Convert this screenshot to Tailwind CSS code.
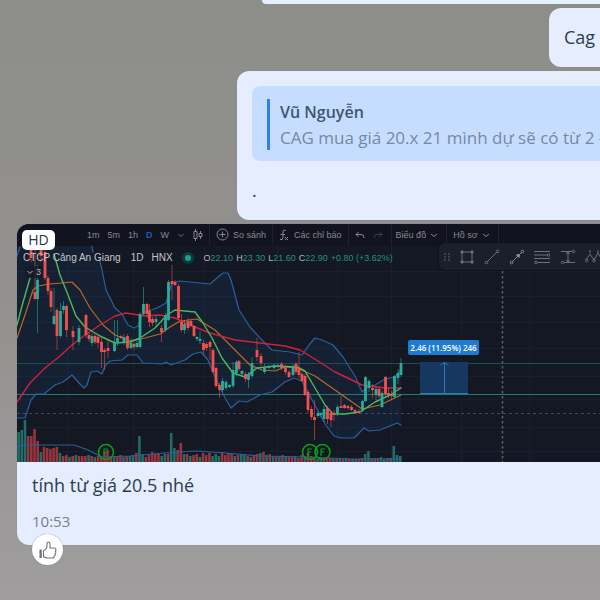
<!DOCTYPE html>
<html lang="vi">
<head>
<meta charset="utf-8">
<meta name="viewport" content="width=device-width, initial-scale=1">
<title>Chat</title>
<script src="https://cdn.jsdelivr.net/npm/@tailwindcss/browser@4"></script>
</head>
<body class="min-h-screen overflow-x-hidden bg-linear-to-b from-[#8d8e8a] via-[#939190] to-[#9f9d9d] font-['Open_Sans','Noto_Sans',sans-serif] text-[#2b3d52]">
<main class="flex flex-col gap-1 pb-8">
  <div class="ml-[262px] h-1 rounded-bl-xl bg-[#e5f1ff]"></div>

  <article class="ml-[549px] overflow-hidden rounded-l-xl bg-[#e5edff] py-4 pl-[15px] whitespace-nowrap shadow-[0_0_1px_#6b7280]">
    <p class="text-[18px] leading-[27px]">Cag</p>
  </article>

  <article class="ml-[237px] overflow-hidden rounded-l-xl bg-[#e5edff] pt-[15px] pb-4 pl-[15px] shadow-[0_0_1px_#6b7280]">
    <blockquote class="rounded-l-lg bg-[#c7ddff] pt-[13px] pb-[11px] pl-[15px] whitespace-nowrap">
      <div class="border-l-[3px] border-[#2f80ed] pl-[10px]">
        <p class="text-[16px] leading-[27px] font-semibold text-[#3f5672]">Vũ Nguyễn</p>
        <p class="text-[17px] leading-[24px] text-[#7589a3]">CAG mua giá 20.x 21 mình dự sẽ có từ 2 -</p>
      </div>
    </blockquote>
    <p class="mt-4 text-[18px] leading-[27px]">.</p>
  </article>

  <article class="relative ml-[17px] rounded-l-xl bg-[#e5edff] shadow-[0_0_1px_#6b7280]">
    <figure class="relative h-[238px] overflow-hidden rounded-tl-xl bg-[#141823] font-['Liberation_Sans',sans-serif]">
      <svg id="chart" class="absolute inset-0 size-full" viewBox="17 224 583 238" preserveAspectRatio="xMinYMin slice" fill="none" aria-label="CAG 1D">
        <g stroke="#1a1f2b">
          <path d="M67.500 245V462M133.500 245V462M204.500 245V462M277.500 245V462M337.500 245V462M391.500 245V462M461.500 270V462M529.500 270V462M17 271.500H600M17 296.500H600M17 322.500H600M17 348.500H600M17 376.500H600M17 399.500H600M17 427.500H600M17 451.500H600"/>
        </g>
        <rect x="17" y="224" width="583" height="22" fill="#11141e"/>
        <path fill="#1b4b85" fill-opacity=".17" d="M17 246H92L102 270 106 290 115 308 122 314 128 325 134 328 138 326 141 318 145 312 157 308 166 303 172 283 180 281 210 284 217 278 223 273 228 273 231 280 239 310 250 327 260 338 272 350 290 352 302 355 309 345 315 338 322 340 333 345 343 357 355 376 362 392 366 388 375 385 385 379 395 377 401 370V425L397 423 380 430 369 431 364 428 354 438 341 438 334 436 325 424 312 400 302 381 294 378 285 382 272 392 260 395 247 402 239 401 231 408 225 398 215 377 208 360 201 352 193 354 185 360 171 365 166 362 162 364 143 363 137 355 128 355 122 360 110 361 105 366 102 374 97 371 91 372 87 385 84 388 80 384 72 375 63 382 55 385 44 394 36 394 31 400 25 418 17 418Z"/>
        <path stroke="#1a504f" d="M17 363.500H600"/>
        <path stroke="#23796f" d="M17 394.500H600"/>
        <path stroke="#434854" stroke-dasharray="3 3" d="M17 413.500H600"/>
        <path stroke="#5b606b" stroke-width="1.500" stroke-dasharray="2.500 2.500" d="M502.500 271V462"/>
        <g id="volume"></g>
        <g stroke-linejoin="round" stroke-linecap="round" stroke-width="1.200">
          <g stroke="#29609f">
            <path d="M17 256L20 247M92 246L93 252M99 258L102 270 106 290 115 308 122 314 128 325 134 328 138 326 141 318 145 312 157 308 166 303 172 283 180 281 210 284 217 278 223 273 228 273 231 280 239 310 250 327 260 338 272 350 290 352 302 355 309 345 315 338 322 340 333 345 343 357 355 376 362 392 366 388 375 385 385 379 395 377 401 370"/>
            <path d="M17 418H25L31 400 36 394 44 394 55 385 63 382 72 375 80 384 84 388 87 385 91 372 97 371 102 374 105 366 110 361 122 360 128 355 137 355 143 363 162 364 166 362 171 365 185 360 193 354 201 352 208 360 215 377 225 398 231 408 239 401 247 402 260 395 272 392 285 382 294 378 302 381 312 400 325 424 334 436 341 438 354 438 364 428 369 431 380 430 397 423 401 425"/>
            <path d="M17 447L24 445H74L88 450 102 457 130 456 165 453 195 451 225 453 260 456 310 457 350 459 401 459"/>
          </g>
          <path stroke="#b76a2b" d="M17 338L25 315 33 290 38 286 50 284 72 282 80 290 90 308 103 325 115 335 130 341 145 338 160 334 170 327 180 321 197 319 215 330 235 350 250 365 262 370 275 371 285 367 297 368 315 376 335 390 362 409 380 405 401 395"/>
          <path stroke="#d3203b" stroke-width="1.400" d="M17 402L30 383 45 368 60 356 72 345 85 335 100 325 115 316 126 313 145 316 160 315 175 318 190 325 210 333 235 340 260 343 285 346 300 350 318 361 335 372 352 380 362 385 385 388 401 388"/>
          <path stroke="#4fb955" stroke-width="1.400" d="M17 325L22 306 30 278M54 254L60 275 68 295 76 316 85 327 100 336 115 343 130 342 140 338 155 328 167 315 175 310 195 312 203 323 212 338 222 358 233 373 245 377 257 368 275 366 297 367 305 371 315 388 325 405 333 414 345 414 360 412 375 402 390 395 401 388"/>
        </g>
        <g id="candles"></g>
        <g stroke="#0c9c18" stroke-width="1.600">
          <circle cx="106" cy="452" r="7.500"/><circle cx="310" cy="452" r="7.500"/><circle cx="322.500" cy="452" r="7.500"/>
          <path d="M104 456V449H108M104 452H107M308 456V449H312M308 452H311M321 456V449H325M321 452H324" stroke-width="1.200"/>
        </g>
        <rect x="420" y="362" width="48" height="32" fill="#163760"/>
        <path stroke="#3277b9" d="M420 393.500H468M444.500 393V363M440.500 365L444.500 362.500 448.500 365"/>
      </svg>

      <div class="relative flex h-[21px] w-max items-center pl-[70px] text-[9px] leading-[12px] whitespace-nowrap text-[#858993]">
        <div class="flex items-center gap-2">
          <button>1m</button><button>5m</button><button>1h</button><button class="font-bold text-[#1d5fae]">D</button><button>W</button>
          <svg class="h-2 w-2" viewBox="0 0 8 8" fill="none" stroke="#686d78"><path d="M1.500 3L4 5.500 6.500 3"/></svg>
        </div>
        <button class="ml-[8px]" aria-label="Nến"><svg class="h-3 w-[10px]" viewBox="0 0 10 12" fill="none" stroke="#858993"><path d="M2.500 0V2M2.500 10V12M1 2.500H4V9.500H1ZM7.500 2V4M7.500 8V10M6 4.500H9V7.500H6Z"/></svg></button>
        <div class="ml-[6px] h-[21px] w-px bg-[#1f232f]"></div>
        <button class="ml-[6px] flex items-center gap-1"><svg class="size-[13px]" viewBox="0 0 13 13" fill="none" stroke="#858993"><circle cx="6.500" cy="6.500" r="5.500"/><path d="M6.500 3.500V9.500M3.500 6.500H9.500"/></svg>So sánh</button>
        <div class="ml-[6px] h-[21px] w-px bg-[#1f232f]"></div>
        <button class="ml-[6px] flex items-center gap-[5px]"><svg class="h-3 w-[10px]" viewBox="0 0 10 12" fill="none" stroke="#858993"><path d="M7 1.500Q4 0 4 3V8.500Q4 11.500 1 10.500M1.500 5.500H6M6 8L9 11M9 8L6 11"/></svg>Các chỉ báo</button>
        <div class="ml-[6px] h-[21px] w-px bg-[#1f232f]"></div>
        <button class="ml-[6px]" aria-label="Hoàn tác"><svg class="h-2 w-[10px]" viewBox="0 0 10 8" fill="none" stroke="#858993"><path d="M3.500 1L1 3.500 3.500 6M1 3.500H6Q9 3.500 9 7"/></svg></button>
        <button class="ml-2" aria-label="Làm lại"><svg class="h-2 w-[10px]" viewBox="0 0 10 8" fill="none" stroke="#3a3f4b"><path d="M6.500 1L9 3.500 6.500 6M9 3.500H4Q1 3.500 1 7"/></svg></button>
        <div class="ml-2 h-[21px] w-px bg-[#1f232f]"></div>
        <button class="ml-1 flex items-center gap-1">Biểu đồ<svg class="h-2 w-2" viewBox="0 0 8 8" fill="none" stroke="#858993"><path d="M1 3L4 5.500 7 3"/></svg></button>
        <div class="ml-2 h-[21px] w-px bg-[#1f232f]"></div>
        <button class="ml-[6px] flex items-center gap-1">Hồ sơ<svg class="h-2 w-2" viewBox="0 0 8 8" fill="none" stroke="#858993"><path d="M1 3L4 5.500 7 3"/></svg></button>
        <div class="ml-2 h-[21px] w-px bg-[#1f232f]"></div>
      </div>

      <div class="relative mt-[5px] flex w-max items-center pl-[6px] text-[10px] leading-[16px] whitespace-nowrap text-[#c3c6cc]">
        <span>CTCP Cảng An Giang</span>
        <span class="ml-[10px]">1D</span>
        <span class="ml-2">HNX</span>
        <span class="ml-[9px] flex size-3 items-center justify-center rounded-full bg-[#0c3a3d]"><span class="size-[6px] rounded-full bg-[#1ba08c]"></span></span>
        <span class="ml-[10px] flex gap-[3px] text-[9px] text-[#23917f]">
          <span><span class="text-[#b3b6bd]">O</span>22.10</span>
          <span><span class="text-[#b3b6bd]">H</span>23.30</span>
          <span><span class="text-[#b3b6bd]">L</span>21.60</span>
          <span><span class="text-[#b3b6bd]">C</span>22.90</span>
          <span>+0.80 (+3.62%)</span>
        </span>
      </div>
      <button class="relative ml-2 flex items-center gap-[2px] bg-[#141823]/70 px-px text-[9px] leading-[12px] text-[#b3b6bd]"><svg class="h-2 w-2" viewBox="0 0 8 8" fill="none" stroke="#b3b6bd"><path d="M1.500 3L4 5.500 6.500 3"/></svg>3</button>

      <div class="absolute top-[19px] right-0 left-[422px] flex h-[27px] items-center gap-[9px] overflow-hidden rounded-l-md bg-[#1b1f2a] pl-[5px] shadow-[0_0_2px_#05070c]">
        <svg class="h-4 w-[6px] shrink-0" viewBox="0 0 6 16" fill="#3d424e"><path d="M0 4H2V6H0ZM4 4H6V6H4ZM0 7H2V9H0ZM4 7H6V9H4ZM0 10H2V12H0ZM4 10H6V12H4Z"/></svg>
        <svg class="size-4 shrink-0" viewBox="0 0 16 16" fill="none" stroke="#6d717b"><path d="M3 3H13V13H3Z"/><path fill="#6d717b" d="M2 2H4V4H2ZM12 2H14V4H12ZM2 12H4V14H2ZM12 12H14V14H12Z"/></svg>
        <svg class="size-4 shrink-0" viewBox="0 0 16 16" fill="none" stroke="#6d717b"><path d="M3 13L13 3"/><circle cx="2.500" cy="13.500" r="1.300"/><circle cx="13.500" cy="2.500" r="1.300"/></svg>
        <svg class="size-4 shrink-0" viewBox="0 0 16 16" fill="none" stroke="#858993"><path d="M3 13L13 3"/><path fill="#a3a6ad" d="M7.500 6L10.500 5.500 10 8.500Z"/><circle cx="2.500" cy="13.500" r="1.300"/><circle cx="13.500" cy="2.500" r="1.300"/></svg>
        <svg class="h-4 w-[17px] shrink-0" viewBox="0 0 17 16" fill="none" stroke="#6d717b"><path d="M0 2.500H16M0 6H13M0 9.500H16M4 13.500H16"/><circle cx="14.500" cy="6" r="1.300"/><circle cx="2" cy="13.500" r="1.300"/></svg>
        <svg class="size-4 shrink-0" viewBox="0 0 16 16" fill="none" stroke="#6d717b"><path d="M1 2.500H12M4 13.500H15M8 3V13M6 5L8 3 10 5M6 11L8 13 10 11"/><circle cx="13.500" cy="2.500" r="1.300"/><circle cx="2.500" cy="13.500" r="1.300"/></svg>
        <svg class="h-4 w-[22px] shrink-0" viewBox="0 0 22 16" fill="none" stroke="#6d717b"><path d="M1 11L5 5 9 11 13 4 17 11 21 5"/><path fill="#6d717b" d="M5 1V4M13 1V4"/><circle cx="1.500" cy="11.500" r="1.300"/><circle cx="9" cy="11.500" r="1.300"/></svg>
      </div>

      <div class="absolute top-[116px] left-[391px] h-[15px] w-[71px] rounded-[2px] bg-[#207bd0] text-center font-['Open_Sans',sans-serif] text-[8px] leading-[15px] font-semibold whitespace-nowrap text-white">2.46 (11.95%) 246</div>
      <span class="absolute top-[6px] left-[5px] h-5 w-[33px] rounded-[5px] bg-white text-center font-['Open_Sans',sans-serif] text-[14px] leading-5 text-[#26323f]">HD</span>
    </figure>

    <div class="pt-[10px] pb-[13px] pl-[15px]">
      <p class="text-[18px] leading-[27px]">tính từ giá 20.5 nhé</p>
      <time class="mt-3 block text-[15px] leading-[21px] text-[#72809a]">10:53</time>
    </div>
    <button class="absolute -bottom-5 left-[15px] flex size-[31px] items-center justify-center rounded-full bg-white shadow-[0_0_1px_#6b7280]" aria-label="Thích">
      <svg class="size-[18px]" viewBox="0 0 18 18" fill="none" stroke="#6e747d" stroke-width="1.100" stroke-linejoin="round" stroke-linecap="round"><path d="M4.500 9.500Q8 8.500 8 4.500V2.500Q8 1 9.500 1 11 1.200 11 3.200V7H15Q17 7 17 8.700 17 9.500 16.300 10 17 10.600 16.800 11.500 16.700 12.200 16 12.600 16.500 13.400 16.200 14 16 14.700 15.300 15 15.300 17 13 17H8.500Q6 17 4.500 15.500Z"/><path d="M1 9V16.500H2.200V9Z" fill="#6e747d"/></svg>
    </button>
  </article>
</main>

<script>
// Each candle: x, high, low, body top, body bottom, rising (1) or falling (0)
const candles = [
[31,246,262,248,258,0],[35,250,300,292,299,0],[37.5,265,333,280,299,1],[41,246,262,248,256,0],[45,246,280,252,278,0],[48,275,295,278,291,0],[51,288,312,291,307,0],[54,288,325,316,324,1],[57,308,350,310,336,0],[60.5,303,338,311,336,1],[63.5,301,314,306,310,1],[66.5,305,337,306,330,0],[73,326,350,331,337,0],[79,325,345,328,342,1],[86,314,338,315,335,0],[89,333,342,335,339,0],[92,333,346,336,343,1],[95,334,344,336,342,0],[98,334,348,337,343,0],[101.5,338,368,342,352,0],[104.500,348,370,350,352,0],[108,340,358,348,351,0],[114.500,320,352,343,351,1],[117.500,320,346,338,343,1],[121,335,339,336,338,0],[124,334,345,337,343,1],[127.500,334,350,336,348,0],[131,338,349,343,348,1],[134,342,350,344,347,0],[137,340,348,343,347,1],[140,312,348,314,347,1],[143.500,287,315,304,314,1],[147,303,318,304,314,0],[149.500,304,327,311,322,0],[152.500,317,326,319,323,0],[156,315,327,319,322,1],[161.500,325,342,328,332,0],[165.500,313,332,315,330,1],[168.500,280,321,282,320,1],[172,265,300,281,284,0],[175,280,286,282,285,0],[178.500,284,320,286,318,0],[181.500,314,332,322,330,0],[184.500,320,334,324,330,1],[188,318,331,321,328,0],[191,319,327,321,326,0],[194,325,337,326,336,0],[197,336,341,337,339,1],[200,331,344,339,341,1],[203.500,340,354,343,350,0],[206.500,342,351,344,348,0],[210,340,360,342,347,0],[213,348,373,350,372,0],[216,367,388,368,386,0],[219.500,383,398,385,390,0],[222.500,378,392,381,390,1],[226,380,390,382,388,1],[229.500,384,388,385,387,1],[233,362,388,370,386,1],[236.500,360,376,362,373,1],[239,360,371,361,369,0],[242,370,375,371,374,1],[245.500,372,382,374,379,0],[248.500,372,388,374,380,1],[252,357,378,363,376,1],[257,338,361,350,357,0],[261,353,366,356,363,0],[264.500,364,374,367,372,1],[269,365,369,366,368,1],[274,364,370,365,368,1],[278,364,368,365,367,1],[281.500,362,370,364,368,0],[285.500,365,375,368,372,0],[289,370,378,372,377,0],[293,364,376,366,375,1],[296,362,374,364,372,0],[299,352,378,368,375,0],[302,372,382,374,381,0],[305,374,396,376,395,0],[308,390,413,392,410,0],[311.500,406,420,409,417,0],[314.500,400,440,417,420,0],[318,411,418,413,416,1],[321,412,417,413,415,1],[324,406,422,409,419,1],[327.500,406,424,408,419,0],[331,411,427,413,420,0],[334,410,421,413,415,0],[337.500,405,416,407,413,1],[341,396,408,406,408,0],[344.500,404,409,405,408,0],[348,405,410,406,408,0],[351.500,405,411,407,410,0],[355,409,413,410,412,0],[359,409,414,411,413,0],[362.500,400,412,401,411,1],[365.500,376,402,377,401,1],[369,379,392,381,388,1],[372.500,384,398,388,390,0],[376,387,400,389,395,1],[379,388,398,389,396,0],[382,391,408,393,407,1],[385.500,376,396,377,394,0],[388.500,388,398,393,395,0],[391.500,391,399,394,396,0],[394.500,375,398,376,397,1],[398,369,384,373,378,1],[401,358,377,363,375,1]];
// Volume heights, sign gives the colour: positive rising, negative falling
const volumes = [30,32,42,-26,-26,-33,-21,10,-15,-14,-13,-14,-15,9,-6,-7,5,-6,7,-6,-6,-6,7,-6,5,-6,-5,-10,-12,-5,6,-5,-7,5,-6,6,7,-9,26,8,-5,-7,-10,-8,-8,6,8,-8,29,14,-12,-19,8,-8,6,-7,-8,5,-9,-7,-9,6,8,6,-10,-7,-9,-8,6,-7,8,7,-6,5,-6,-8,9,-10,7,-8,6,-5,5,-7,6,-5,-5,6,-4,-7,5,-9,-6,-4,3,4,-4,-3,-4,3,-3,3,-3,4,-3,3,-3,3,-4,8,11,-4,4,-4,5,3,-4,4,16,7,6];
document.getElementById('volume').innerHTML = volumes.map((v, i) =>
  `<rect x="${(17.3 + i * 3.18).toFixed(1)}" y="${462 - Math.abs(v)}" width="2.600" height="${Math.abs(v)}" fill="${v > 0 ? '#226b67' : '#943540'}"/>`).join('');
document.getElementById('candles').innerHTML = candles.map(([x, h, l, t, b, up]) => {
  const c = up ? '#2bab98' : '#f0524f';
  return `<path d="M${x} ${h}V${l}" stroke="${c}" stroke-width=".8" stroke-opacity=".7"/><rect x="${x - 1.4}" y="${t}" width="2.800" height="${b - t}" fill="${c}"/>`;
}).join('');
</script>
</body>
</html>
